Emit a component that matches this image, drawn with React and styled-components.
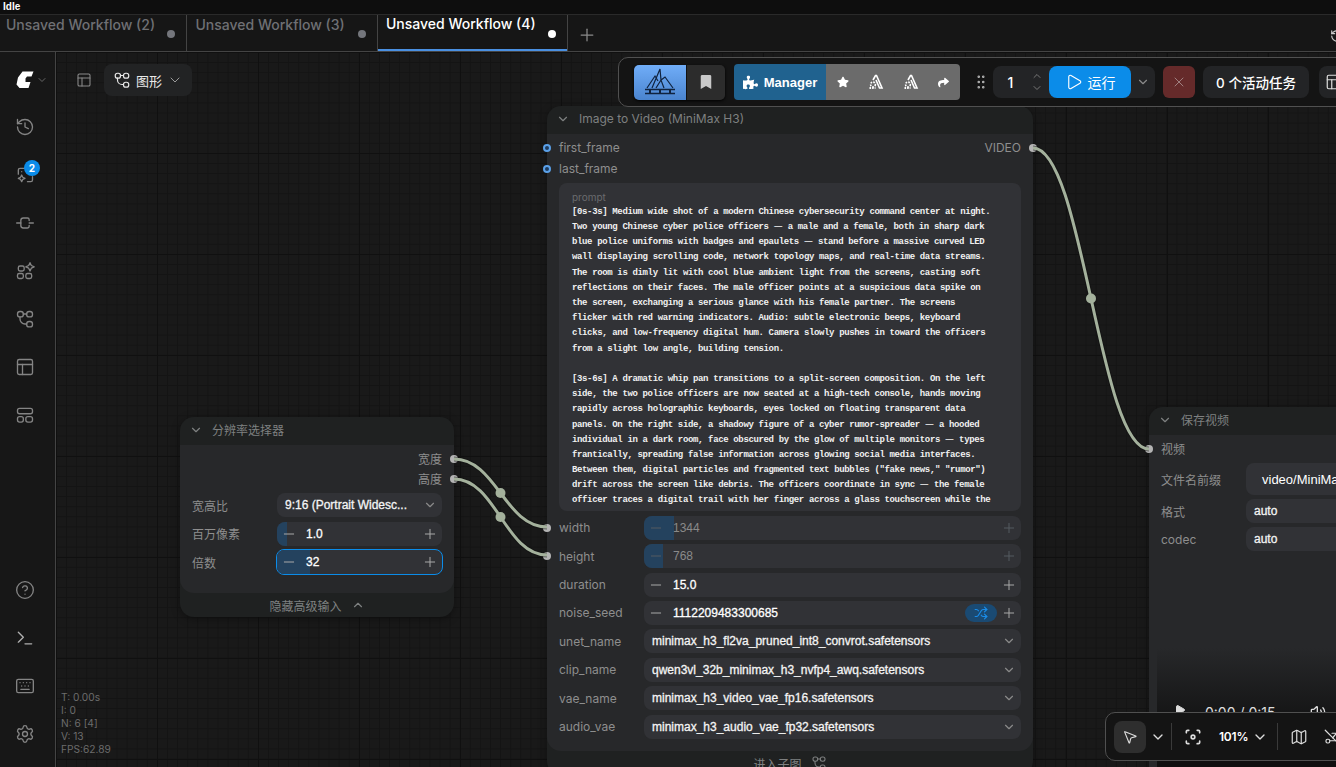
import React from 'react'
import styled, { createGlobalStyle } from 'styled-components'
import {
  Plus, Minus, ChevronDown, ChevronUp, History, PanelsTopLeft, CircleHelp, Terminal, Keyboard,
  Settings, Shuffle, Play, X, MousePointer2, Map, Volume2, GripVertical
} from 'lucide-react'
import { FaPuzzlePiece, FaStar, FaBookmark, FaShare } from 'react-icons/fa'

const GlobalStyle = createGlobalStyle`
  html, body { margin: 0; padding: 0; background: #161616; }
  body { font-family: Inter, "Noto Sans CJK SC", sans-serif; overflow: hidden; }
  * { box-sizing: border-box; }
`

const Page = styled.div`
  width: 1336px;
  height: 767px;
  overflow: hidden;
  display: flex;
  flex-direction: column;
  background: #161616;
`

const TitleBar = styled.div`
  height: 14px;
  flex: none;
  padding-left: 3px;
  background: #0e0e0e;
  color: #fff;
  font: bold 10px/13px "Liberation Sans", sans-serif;
`

const TabBar = styled.div`
  height: 38px;
  flex: none;
  display: flex;
  background: #161616;
  border-top: 1px solid #2a2a2a;
  border-bottom: 1px solid #444;
`

const Tab = styled.div`
  width: ${p => p.$w || 190.5}px;
  position: relative;
  flex: none;
  padding: 0 0 0 ${p => p.$offset || 8.5}px;
  font-size: 14px;
  line-height: ${p => (p.$active ? 17 : 19)}px;
  font-weight: 500;
  color: ${p => (p.$active ? '#fff' : '#6f7074')};
  border-right: 1px solid #444;
  box-shadow: ${p => (p.$active ? 'inset 0 -2px 0 #4a90e2' : 'none')};
`

const TabDot = styled.span`
  position: absolute;
  right: 11px;
  top: 15px;
  width: 8px;
  height: 8px;
  border-radius: 50%;
  background: ${p => (p.$active ? '#fff' : '#74767c')};
`

const TabAdd = styled.div`
  width: 38px;
  display: flex;
  align-items: center;
  justify-content: center;
  padding-top: 3px;
  color: #8a8a8a;
`

const TabEnd = styled.div`
  margin-left: auto;
  width: 6px;
  padding-top: 12px;
  overflow: hidden;
  color: #ccc;
`

const Main = styled.div`
  flex: 1;
  min-height: 0;
  display: flex;
`

const Sidebar = styled.aside`
  width: 56px;
  flex: none;
  display: flex;
  flex-direction: column;
  justify-content: space-between;
  padding: 5px 0 9px;
  background: #171717;
  border-right: 1px solid #444;
`

const SideGroup = styled.div`
  display: flex;
  flex-direction: column;
`

const SideItem = styled.div`
  position: relative;
  height: 48px;
  width: 50px;
  display: flex;
  align-items: center;
  justify-content: center;
  color: #848484;
`

const LogoItem = styled(SideItem)`
  height: 46px;
  width: 55px;
  padding-left: 8px;
  gap: 2px;
  color: #666;
`

const Badge = styled.span`
  position: absolute;
  left: 24px;
  top: 9px;
  width: 16px;
  height: 16px;
  border-radius: 50%;
  background: #0b8ce9;
  color: #fff;
  font-size: 10px;
  font-weight: 700;
  line-height: 16px;
  text-align: center;
`

const Canvas = styled.main`
  position: relative;
  flex: 1;
  overflow: hidden;
  background-color: #191919;
  background-image:
    linear-gradient(#101010 1px, transparent 1px),
    linear-gradient(90deg, #101010 1px, transparent 1px),
    linear-gradient(#141414 1px, transparent 1px),
    linear-gradient(90deg, #141414 1px, transparent 1px);
  background-size: 101px 101px, 101px 101px, 10.1px 10.1px, 10.1px 10.1px;
`

const Links = styled.svg`
  position: absolute;
  left: 0;
  top: 0;
  z-index: 2;
  pointer-events: none;
`

const CanvasTools = styled.div`
  position: absolute;
  left: 20px;
  top: 12px;
  display: flex;
  align-items: center;
  gap: 12px;
  color: #8a8a8a;
`

const GraphButton = styled.div`
  width: 88px;
  height: 32px;
  display: flex;
  align-items: center;
  justify-content: center;
  gap: 5px;
  border-radius: 8px;
  background: #222324;
  color: #e8e8e8;
  font-size: 13px;
`

const Stats = styled.div`
  position: absolute;
  left: 5px;
  bottom: 11px;
  color: #6c6c6c;
  font-size: 10.2px;
  line-height: 13px;
`

const TopBar = styled.div`
  position: absolute;
  left: 562px;
  top: 5px;
  width: 800px;
  height: 50px;
  z-index: 5;
  display: flex;
  align-items: center;
  padding: 0 0 0 15px;
  background: #141414;
  border: 1px solid #505050;
  border-radius: 10px;
`

const ActionPair = styled.div`
  display: flex;
  height: 35px;
  border-radius: 5px;
  overflow: hidden;
  box-shadow: 0 1px 3px #000;
`

const LogoButton = styled.div`
  width: 52px;
  display: flex;
  align-items: center;
  justify-content: center;
  background: linear-gradient(#70adf8, #4a84cf);
`

const MarkButton = styled.div`
  width: 39px;
  display: flex;
  align-items: center;
  justify-content: center;
  background: #2c2c2c;
  color: #c8c8c8;
  border-left: 1px solid #111;
`

const ManagerGroup = styled.div`
  margin-left: 9px;
  height: 36px;
  display: flex;
  border-radius: 4px;
  overflow: hidden;
  color: #fff;
`

const ManagerButton = styled.div`
  width: 92px;
  display: flex;
  align-items: center;
  justify-content: center;
  gap: 6px;
  background: #20628f;
  font: bold 13px "Liberation Sans", sans-serif;
`

const ManagerTools = styled.div`
  width: 134px;
  display: flex;
  align-items: center;
  justify-content: space-around;
  padding: 0 2px;
  background: #6b6b6b;
`

const Grip = styled.div`
  margin-left: 12px;
  width: 18px;
  display: flex;
  justify-content: center;
  color: #b8b8b8;
`

const RunGroup = styled.div`
  margin-left: 3px;
  width: 162px;
  height: 32px;
  display: flex;
  align-items: center;
  border-radius: 8px;
  background: #232426;
  color: #fff;
`

const RunCount = styled.span`
  width: 35px;
  text-align: center;
  font-size: 14px;
  font-weight: 500;
`

const RunArrows = styled.span`
  width: 18px;
  margin-right: 3px;
  display: flex;
  flex-direction: column;
  align-items: center;
  color: #777;
`

const RunButton = styled.div`
  width: 82px;
  height: 32px;
  display: flex;
  align-items: center;
  justify-content: center;
  gap: 5px;
  border-radius: 8px;
  background: #0b8ce9;
  font-size: 14px;
`

const RunMenu = styled.span`
  flex: 1;
  display: flex;
  justify-content: center;
  color: #8a8a8a;
`

const StopButton = styled.div`
  margin-left: 8px;
  width: 32px;
  height: 32px;
  display: flex;
  align-items: center;
  justify-content: center;
  border-radius: 6px;
  background: #652a2a;
  color: #a08080;
`

const QueueButton = styled.div`
  margin-left: 8px;
  width: 106px;
  height: 32px;
  display: flex;
  align-items: center;
  justify-content: center;
  border-radius: 8px;
  background: #232426;
  color: #fff;
  font-size: 13.5px;
  font-weight: 500;
`

const PanelButton = styled.div`
  margin-left: 10px;
  width: 40px;
  height: 32px;
  display: flex;
  align-items: center;
  padding-left: 6px;
  border-radius: 8px;
  background: #232426;
  color: #ddd;
`

const Node = styled.section`
  position: absolute;
  z-index: 1;
  left: ${p => p.$x}px;
  top: ${p => p.$y}px;
  width: ${p => p.$w}px;
  border-radius: 14px;
  background: #1f2121;
  box-shadow: 0 2px 8px rgba(0, 0, 0, .35);
  overflow: visible;
`

const NodeHeader = styled.header`
  height: 28px;
  display: flex;
  align-items: center;
  gap: 9px;
  padding: 0 0 3px 9px;
  color: #7e8080;
  font-size: 12px;
`

const NodeBody = styled.div`
  position: relative;
  display: flex;
  flex-direction: column;
  gap: ${p => p.$gap || 4.4}px;
  padding: ${p => p.$pad || '3px 12px 12.5px'};
  border-radius: 0 0 14px 14px;
  background: #27282a;
`

const NodeFooter = styled.footer`
  height: 24px;
  display: flex;
  align-items: center;
  justify-content: center;
  gap: 9px;
  color: #7e8080;
  font-size: 12px;
`

const SlotRow = styled.div`
  position: relative;
  height: ${p => p.$h || 20}px;
  display: flex;
  align-items: center;
  justify-content: ${p => (p.$end ? 'flex-end' : 'space-between')};
  color: #8e8e8e;
  font-size: 12px;
`

const SlotDot = styled.span`
  position: absolute;
  top: 50%;
  ${p => (p.$right ? 'right: -16px;' : 'left: -16px;')}
  width: 8px;
  height: 8px;
  margin-top: -4px;
  border-radius: 50%;
  background: ${p => (p.$blue ? '#1d3a5c' : '#b4b4b4')};
  border: ${p => (p.$blue ? '2px solid #5aa0e8' : 'none')};
  z-index: 3;
`

const PromptBox = styled.div`
  height: 328px;
  padding: 8px 13px 0;
  overflow: hidden;
  border-radius: 8px;
  background: #313236;
`

const PromptLabel = styled.div`
  color: #6a6b6e;
  font-size: 10px;
  line-height: 13.5px;
`

const PromptLine = styled.div`
  height: 15.2px;
  color: #f0f0f0;
  font: bold 9px/15.2px "Liberation Mono", monospace;
  letter-spacing: -0.36px;
  white-space: pre;
`

// the prompt's em dash sits in a double-width cell, as in a CJK monospace
const Dash = styled.span`
  font: 400 10px/0 "Noto Sans CJK SC", sans-serif;
  letter-spacing: 0.08px;
`

const FieldRow = styled.div`
  position: relative;
  display: grid;
  grid-template-columns: 85px 1fr;
  align-items: center;
  color: #8e8e8e;
  font-size: 12px;
`

const Stepper = styled.div`
  position: relative;
  height: ${p => (p.$focus ? 26 : 24)}px;
  margin: ${p => (p.$focus ? '-1px' : 0)};
  display: flex;
  align-items: center;
  overflow: hidden;
  border-radius: 8px;
  background: #313236;
  border: ${p => (p.$focus ? '1px solid #0b8ce9' : 'none')};
  color: ${p => (p.$dim ? '#8a8a8a' : '#fff')};
  font: 400 12px "Liberation Sans", sans-serif;
  -webkit-text-stroke: ${p => (p.$dim ? 0 : '0.3px')};
`

const StepFill = styled.span`
  position: absolute;
  left: 0;
  top: 0;
  bottom: 0;
  background: #24425e;
`

const StepIcon = styled.span`
  position: relative;
  flex: none;
  width: 24px;
  display: flex;
  justify-content: center;
  color: ${p => (p.$dim ? '#555a60' : '#a8a8a8')};
`

const StepValue = styled.span`
  position: relative;
  flex: 1;
  padding-left: 5px;
`

const ShuffleButton = styled.span`
  width: 32px;
  height: 18px;
  display: flex;
  align-items: center;
  justify-content: center;
  border-radius: 9px;
  background: #1a4a73;
  color: #1a8ce8;
`

const Select = styled.div`
  height: 24px;
  display: flex;
  align-items: center;
  justify-content: space-between;
  padding-left: 8px;
  border-radius: 8px;
  background: #313236;
  color: #f4f4f4;
  font: 400 12px "Liberation Sans", sans-serif;
  -webkit-text-stroke: 0.3px;
  white-space: nowrap;
`

const TextField = styled.div`
  height: 32px;
  display: flex;
  align-items: center;
  padding-left: 16px;
  border-radius: 8px;
  background: #313236;
  color: #fff;
  font: 13px "Liberation Sans", sans-serif;
  white-space: nowrap;
`

const Preview = styled.div`
  margin: 93px -12px 0 -4px;
  height: 130px;
  padding: 56px 0 0 17px;
  display: flex;
  align-items: flex-start;
  gap: 19px;
  background: linear-gradient(#27282a, #0f0f0f 70%);
  color: #ddd;
  font-size: 14px;
  line-height: 17px;
`

const PreviewVolume = styled.span`
  margin-left: 15px;
  display: flex;
`

const BottomBar = styled.div`
  position: absolute;
  left: 1049px;
  top: 660px;
  width: 300px;
  height: 49px;
  z-index: 5;
  display: flex;
  align-items: center;
  padding-left: 8px;
  border: 1px solid #505050;
  border-radius: 10px;
  background: #141414;
  color: #ddd;
`

const PointerButton = styled.div`
  width: 32px;
  height: 32px;
  display: flex;
  align-items: center;
  justify-content: center;
  border-radius: 8px;
  background: #2e2e2e;
`

const BarIcon = styled.span`
  display: flex;
  justify-content: center;
  width: ${p => p.$w}px;
`

const BarLine = styled.span`
  width: 1px;
  height: 27px;
  margin-left: ${p => p.$ml || 0}px;
  background: #3a3a3a;
`

const Zoom = styled.span`
  margin-left: 5px;
  color: #fff;
  font-size: 12px;
  font-weight: 600;
  letter-spacing: -0.2px;
`

const Ico = ({ size = 20, children, sw = 1.6 }) => (
  <svg width={size} height={size} viewBox="0 0 24 24" fill="none" stroke="currentColor" strokeWidth={sw} strokeLinecap="round" strokeLinejoin="round">
    {children}
  </svg>
)

const GraphIcon = ({ size = 20 }) => (
  <Ico size={size}>
    <rect x="3" y="3" width="7" height="6.5" rx="3" />
    <rect x="14" y="3" width="7" height="6.5" rx="3" />
    <rect x="14" y="15" width="7" height="6.5" rx="3" />
    <path d="M6 9.500v2.500a6 6 0 0 0 6 6h2M10 6h4" />
  </Ico>
)

const AssetsIcon = () => (
  <Ico>
    <path d="M4 11V6a2 2 0 0 1 2-2h6M15 20h4a2 2 0 0 0 2-2v-4" />
    <path d="M8 12l1.300 2.700L12 16l-2.700 1.300L8 20l-1.300-2.700L4 16l2.700-1.300z" />
    <path d="M8 8h.01" />
  </Ico>
)

const NodesIcon = () => (
  <Ico>
    <path d="M2 12h5M17 12h5" />
    <path d="M17 9V8a2 2 0 0 0-2-2H10a3 3 0 0 0-3 3v6a3 3 0 0 0 3 3h5a2 2 0 0 0 2-2v-1" />
  </Ico>
)

const BlocksIcon = () => (
  <Ico>
    <rect x="4" y="6" width="7" height="6" rx="2" />
    <rect x="3" y="15" width="7" height="6" rx="2" />
    <rect x="13" y="15" width="7" height="6" rx="2" />
    <path d="M18 2l1.600 3.400L23 7l-3.400 1.600L18 12l-1.600-3.400L13 7l3.400-1.600z" />
  </Ico>
)

const TemplatesIcon = () => (
  <Ico>
    <rect x="3" y="4" width="18" height="6.500" rx="2.500" />
    <rect x="3" y="14" width="7" height="6.500" rx="2.500" />
    <rect x="13" y="14" width="8" height="6.500" rx="2.500" />
  </Ico>
)

const ComfyLogo = () => (
  <svg width="18" height="18" viewBox="0 0 18 18">
    <path fill="#fff" d="M6.500 0.500H17.500L15.500 5.500H11L9.500 7.500 9.500 11 14.500 11 12.500 17H3.500L0.500 13.500 2 6.500z" />
  </svg>
)

const PeakLogo = () => (
  <svg width="36" height="32" viewBox="0 0 36 32" fill="none" stroke="#10233f" strokeWidth="1.200">
    <path d="M5 22 13 10l3 5M10 22l8-19 1 11 4-3 8 11M14 22l5-8 3 8M19 14l-5 8" />
    <path d="M3 23.500h30M3 27.500h30" strokeWidth="1.400" />
    <path d="M8 24v3M18 24v3M28 24v3" strokeWidth="2" />
  </svg>
)

const VacuumIcon = () => (
  <svg width="16" height="16" viewBox="0 0 16 16" fill="none" stroke="#fff" strokeWidth="1.600">
    <path d="M5 6 7.500 1.500h1L14 14h-2.500L8 6" />
    <path d="M1.500 14h6" strokeWidth="2.200" strokeDasharray="1.600 1" />
    <circle cx="5" cy="10.500" r="2.400" strokeDasharray="1.600 1" />
  </svg>
)

const FocusIcon = () => (
  <Ico size={20} sw={2}>
    <path d="M7 4H5.500A1.500 1.500 0 0 0 4 5.500V7M17 4h1.500A1.500 1.500 0 0 1 20 5.500V7M7 20H5.500A1.500 1.500 0 0 1 4 18.500V17M17 20h1.500a1.500 1.500 0 0 0 1.500-1.500V17" />
    <circle cx="12" cy="12" r="2.200" />
  </Ico>
)

const HideLinksIcon = () => (
  <Ico size={18}>
    <path d="M3 3l18 18" />
    <rect x="4" y="15" width="5" height="5" rx="2" />
    <path d="M9 17h8M12 7h6l-5 6" />
  </Ico>
)

const Row = ({ label, dot, children }) => (
  <FieldRow>
    {dot && <SlotDot />}
    <span>{label}</span>
    {children}
  </FieldRow>
)

const NumberField = ({ value, fill, dim, focus, children }) => (
  <Stepper $dim={dim} $focus={focus}>
    {fill > 0 && <StepFill style={{ width: fill }} />}
    <StepIcon $dim={dim}><Minus size={16} strokeWidth={1.5} /></StepIcon>
    <StepValue>{value}</StepValue>
    {children}
    <StepIcon $dim={dim}><Plus size={16} strokeWidth={1.5} /></StepIcon>
  </Stepper>
)

const Choice = ({ children }) => (
  <Select>
    <span>{children}</span>
    <StepIcon $dim><ChevronDown size={14} color="#8a8a8a" /></StepIcon>
  </Select>
)

const prompt = `[0s-3s] Medium wide shot of a modern Chinese cybersecurity command center at night.
Two young Chinese cyber police officers — a male and a female, both in sharp dark
blue police uniforms with badges and epaulets — stand before a massive curved LED
wall displaying scrolling code, network topology maps, and real-time data streams.
The room is dimly lit with cool blue ambient light from the screens, casting soft
reflections on their faces. The male officer points at a suspicious data spike on
the screen, exchanging a serious glance with his female partner. The screens
flicker with red warning indicators. Audio: subtle electronic beeps, keyboard
clicks, and low-frequency digital hum. Camera slowly pushes in toward the officers
from a slight low angle, building tension.

[3s-6s] A dramatic whip pan transitions to a split-screen composition. On the left
side, the two police officers are now seated at a high-tech console, hands moving
rapidly across holographic keyboards, eyes locked on floating transparent data
panels. On the right side, a shadowy figure of a cyber rumor-spreader — a hooded
individual in a dark room, face obscured by the glow of multiple monitors — types
frantically, spreading false information across glowing social media interfaces.
Between them, digital particles and fragmented text bubbles ("fake news," "rumor")
drift across the screen like debris. The officers coordinate in sync — the female
officer traces a digital trail with her finger across a glass touchscreen while the
male officer isolates the source, and alert icons flash along the curved wall.`

// link endpoints are canvas coordinates, the midpoints carry the reroute dots
const links = [
  { d: 'M398 407C440 407 449 475 491 475', mid: [444.5, 441] },
  { d: 'M398 427C440 427 449 503 491 503', mid: [444.5, 465] },
  { d: 'M977 96C1027 96 1043 397 1093 397', mid: [1035, 246.5] }
]

export default function App() {
  return (
    <Page>
      <GlobalStyle />
      <TitleBar>Idle</TitleBar>
      <TabBar>
        <Tab $w={187} $offset={6}>Unsaved Workflow (2)<TabDot /></Tab>
        <Tab>Unsaved Workflow (3)<TabDot /></Tab>
        <Tab $active>Unsaved Workflow (4)<TabDot $active /></Tab>
        <TabAdd><Plus size={20} strokeWidth={1.5} /></TabAdd>
        <TabEnd><History size={14} /></TabEnd>
      </TabBar>
      <Main>
        <Sidebar>
          <SideGroup>
            <LogoItem><ComfyLogo /><ChevronDown size={12} /></LogoItem>
            <SideItem><History size={20} strokeWidth={1.6} /></SideItem>
            <SideItem><AssetsIcon /><Badge>2</Badge></SideItem>
            <SideItem><NodesIcon /></SideItem>
            <SideItem><BlocksIcon /></SideItem>
            <SideItem><GraphIcon /></SideItem>
            <SideItem><PanelsTopLeft size={20} strokeWidth={1.6} /></SideItem>
            <SideItem><TemplatesIcon /></SideItem>
          </SideGroup>
          <SideGroup>
            <SideItem><CircleHelp size={20} strokeWidth={1.6} /></SideItem>
            <SideItem><Terminal size={20} strokeWidth={1.6} color="#b0b0b0" /></SideItem>
            <SideItem><Keyboard size={20} strokeWidth={1.6} /></SideItem>
            <SideItem><Settings size={20} strokeWidth={1.6} /></SideItem>
          </SideGroup>
        </Sidebar>
        <Canvas>
          <CanvasTools>
            <PanelsTopLeft size={16} strokeWidth={1.6} />
            <GraphButton>
              <GraphIcon size={18} />
              <span>图形</span>
              <ChevronDown size={16} strokeWidth={1.5} color="#9a9a9a" />
            </GraphButton>
          </CanvasTools>

          <Node $x={124} $y={365} $w={274}>
            <NodeHeader>
              <ChevronDown size={14} />
              <span>分辨率选择器</span>
            </NodeHeader>
            <NodeBody $gap={4.5} $pad="3.5px 12px 19px">
              <div>
                <SlotRow $end>宽度<SlotDot $right /></SlotRow>
                <SlotRow $end>高度<SlotDot $right /></SlotRow>
              </div>
              <Row label="宽高比"><Choice>9:16 (Portrait Widesc...</Choice></Row>
              <Row label="百万像素"><NumberField value="1.0" fill={10} /></Row>
              <Row label="倍数"><NumberField value="32" fill={33} focus /></Row>
            </NodeBody>
            <NodeFooter>
              <span>隐藏高级输入</span>
              <ChevronUp size={14} />
            </NodeFooter>
          </Node>

          <Node $x={491} $y={54} $w={486}>
            <NodeHeader>
              <ChevronDown size={14} />
              <span>Image to Video (MiniMax H3)</span>
            </NodeHeader>
            <NodeBody>
              <div>
                <SlotRow $h={21}>
                  <SlotDot $blue />
                  <span>first_frame</span>
                  <span>VIDEO</span>
                  <SlotDot $right />
                </SlotRow>
                <SlotRow $h={21}>
                  <SlotDot $blue />
                  <span>last_frame</span>
                </SlotRow>
              </div>
              <PromptBox>
                <PromptLabel>prompt</PromptLabel>
                {prompt.split('\n').map((line, n) => (
                  <PromptLine key={n}>
                    {line.split('—').map((part, i) => (
                      <React.Fragment key={i}>
                        {i > 0 && <Dash>—</Dash>}
                        {part}
                      </React.Fragment>
                    ))}
                  </PromptLine>
                ))}
              </PromptBox>
              <Row label="width" dot><NumberField value="1344" fill={30} dim /></Row>
              <Row label="height" dot><NumberField value="768" fill={19} dim /></Row>
              <Row label="duration"><NumberField value="15.0" /></Row>
              <Row label="noise_seed">
                <NumberField value="1112209483300685">
                  <ShuffleButton><Shuffle size={14} /></ShuffleButton>
                </NumberField>
              </Row>
              <Row label="unet_name"><Choice>minimax_h3_fl2va_pruned_int8_convrot.safetensors</Choice></Row>
              <Row label="clip_name"><Choice>qwen3vl_32b_minimax_h3_nvfp4_awq.safetensors</Choice></Row>
              <Row label="vae_name"><Choice>minimax_h3_video_vae_fp16.safetensors</Choice></Row>
              <Row label="audio_vae"><Choice>minimax_h3_audio_vae_fp32.safetensors</Choice></Row>
            </NodeBody>
            <NodeFooter>
              <span>进入子图</span>
              <GraphIcon size={16} />
            </NodeFooter>
          </Node>

          <Node $x={1093} $y={355} $w={400}>
            <NodeHeader>
              <ChevronDown size={14} />
              <span>保存视频</span>
            </NodeHeader>
            <NodeBody $gap={4}>
              <SlotRow $h={21}><SlotDot /><span>视频</span></SlotRow>
              <Row label="文件名前缀"><TextField>video/MiniMax-H3</TextField></Row>
              <Row label="格式"><Choice>auto</Choice></Row>
              <Row label="codec"><Choice>auto</Choice></Row>
              <Preview>
                <Play size={12} fill="#ddd" />
                <span>0:00 / 0:15</span>
                <PreviewVolume><Volume2 size={16} /></PreviewVolume>
              </Preview>
            </NodeBody>
          </Node>

          <Links width="1280" height="715" fill="none">
            {links.map(link => (
              <g key={link.d}>
                <path d={link.d} stroke="#0f0f0f" strokeWidth="5" opacity=".5" />
                <path d={link.d} stroke="#a4b19c" strokeWidth="3" />
                <circle cx={link.mid[0]} cy={link.mid[1]} r="5" fill="#a4b19c" />
              </g>
            ))}
          </Links>

          <TopBar>
            <ActionPair>
              <LogoButton><PeakLogo /></LogoButton>
              <MarkButton><FaBookmark size={14} /></MarkButton>
            </ActionPair>
            <ManagerGroup>
              <ManagerButton><FaPuzzlePiece size={15} />Manager</ManagerButton>
              <ManagerTools>
                <FaStar size={12} />
                <VacuumIcon />
                <VacuumIcon />
                <FaShare size={11} />
              </ManagerTools>
            </ManagerGroup>
            <Grip><GripVertical size={18} strokeWidth={1.4} /></Grip>
            <RunGroup>
              <RunCount>1</RunCount>
              <RunArrows><ChevronUp size={12} /><ChevronDown size={12} /></RunArrows>
              <RunButton><Play size={18} strokeWidth={1.5} />运行</RunButton>
              <RunMenu><ChevronDown size={14} /></RunMenu>
            </RunGroup>
            <StopButton><X size={16} strokeWidth={1.5} /></StopButton>
            <QueueButton>0 个活动任务</QueueButton>
            <PanelButton><PanelsTopLeft size={18} strokeWidth={1.6} /></PanelButton>
          </TopBar>

          <BottomBar>
            <PointerButton><MousePointer2 size={16} strokeWidth={1.7} /></PointerButton>
            <BarIcon $w={24}><ChevronDown size={16} /></BarIcon>
            <BarLine $ml={1} />
            <BarIcon $w={42}><FocusIcon /></BarIcon>
            <Zoom>101%</Zoom>
            <BarIcon $w={24}><ChevronDown size={16} /></BarIcon>
            <BarLine $ml={5} />
            <BarIcon $w={42}><Map size={18} strokeWidth={1.6} /></BarIcon>
            <BarIcon $w={24}><HideLinksIcon /></BarIcon>
          </BottomBar>

          <Stats>
            <div>T: 0.00s</div>
            <div>I: 0</div>
            <div>N: 6 [4]</div>
            <div>V: 13</div>
            <div>FPS:62.89</div>
          </Stats>
        </Canvas>
      </Main>
    </Page>
  )
}
